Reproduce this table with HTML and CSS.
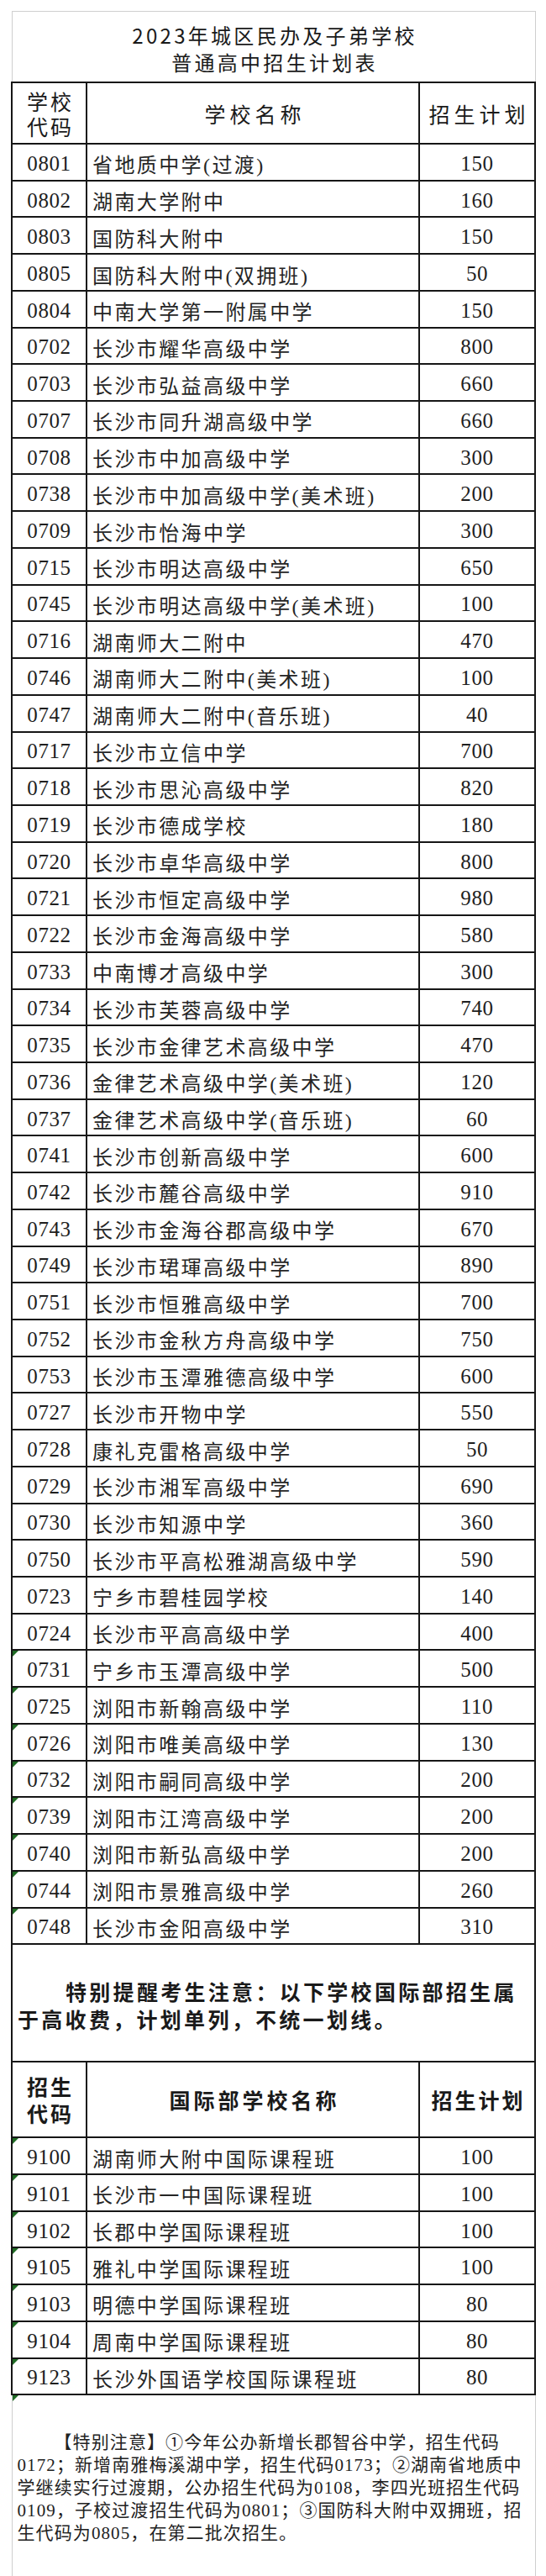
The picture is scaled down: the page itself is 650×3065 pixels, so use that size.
FILE: index.html
```html
<!DOCTYPE html>
<html lang="zh-CN">
<head>
<meta charset="utf-8">
<title>2023年城区民办及子弟学校普通高中招生计划表</title>
<link rel="stylesheet" href="styles.css">
</head>
<body>
<table class="sheet">
  <colgroup>
    <col class="c-code">
    <col class="c-name">
    <col class="c-plan">
  </colgroup>
  <tbody>
    <tr class="title"><td colspan="3">2023年城区民办及子弟学校<br>普通高中招生计划表</td></tr>
    <tr class="head">
      <td class="h-code">学校<br>代码</td>
      <td class="h-name">学校名称</td>
      <td class="h-plan">招生计划</td>
    </tr>
    <tr class="r"><td class="code">0801</td><td class="name">省地质中学(过渡)</td><td class="plan">150</td></tr>
    <tr class="r"><td class="code">0802</td><td class="name">湖南大学附中</td><td class="plan">160</td></tr>
    <tr class="r"><td class="code">0803</td><td class="name">国防科大附中</td><td class="plan">150</td></tr>
    <tr class="r"><td class="code">0805</td><td class="name">国防科大附中(双拥班)</td><td class="plan">50</td></tr>
    <tr class="r"><td class="code">0804</td><td class="name">中南大学第一附属中学</td><td class="plan">150</td></tr>
    <tr class="r"><td class="code">0702</td><td class="name">长沙市耀华高级中学</td><td class="plan">800</td></tr>
    <tr class="r"><td class="code">0703</td><td class="name">长沙市弘益高级中学</td><td class="plan">660</td></tr>
    <tr class="r"><td class="code">0707</td><td class="name">长沙市同升湖高级中学</td><td class="plan">660</td></tr>
    <tr class="r"><td class="code">0708</td><td class="name">长沙市中加高级中学</td><td class="plan">300</td></tr>
    <tr class="r"><td class="code">0738</td><td class="name">长沙市中加高级中学(美术班)</td><td class="plan">200</td></tr>
    <tr class="r"><td class="code">0709</td><td class="name">长沙市怡海中学</td><td class="plan">300</td></tr>
    <tr class="r"><td class="code">0715</td><td class="name">长沙市明达高级中学</td><td class="plan">650</td></tr>
    <tr class="r"><td class="code">0745</td><td class="name">长沙市明达高级中学(美术班)</td><td class="plan">100</td></tr>
    <tr class="r"><td class="code">0716</td><td class="name">湖南师大二附中</td><td class="plan">470</td></tr>
    <tr class="r"><td class="code">0746</td><td class="name">湖南师大二附中(美术班)</td><td class="plan">100</td></tr>
    <tr class="r"><td class="code">0747</td><td class="name">湖南师大二附中(音乐班)</td><td class="plan">40</td></tr>
    <tr class="r"><td class="code">0717</td><td class="name">长沙市立信中学</td><td class="plan">700</td></tr>
    <tr class="r"><td class="code">0718</td><td class="name">长沙市思沁高级中学</td><td class="plan">820</td></tr>
    <tr class="r"><td class="code">0719</td><td class="name">长沙市德成学校</td><td class="plan">180</td></tr>
    <tr class="r"><td class="code">0720</td><td class="name">长沙市卓华高级中学</td><td class="plan">800</td></tr>
    <tr class="r"><td class="code">0721</td><td class="name">长沙市恒定高级中学</td><td class="plan">980</td></tr>
    <tr class="r"><td class="code">0722</td><td class="name">长沙市金海高级中学</td><td class="plan">580</td></tr>
    <tr class="r"><td class="code">0733</td><td class="name">中南博才高级中学</td><td class="plan">300</td></tr>
    <tr class="r"><td class="code">0734</td><td class="name">长沙市芙蓉高级中学</td><td class="plan">740</td></tr>
    <tr class="r"><td class="code">0735</td><td class="name">长沙市金律艺术高级中学</td><td class="plan">470</td></tr>
    <tr class="r"><td class="code">0736</td><td class="name">金律艺术高级中学(美术班)</td><td class="plan">120</td></tr>
    <tr class="r"><td class="code">0737</td><td class="name">金律艺术高级中学(音乐班)</td><td class="plan">60</td></tr>
    <tr class="r"><td class="code">0741</td><td class="name">长沙市创新高级中学</td><td class="plan">600</td></tr>
    <tr class="r"><td class="code">0742</td><td class="name">长沙市麓谷高级中学</td><td class="plan">910</td></tr>
    <tr class="r"><td class="code">0743</td><td class="name">长沙市金海谷郡高级中学</td><td class="plan">670</td></tr>
    <tr class="r"><td class="code">0749</td><td class="name">长沙市珺琿高级中学</td><td class="plan">890</td></tr>
    <tr class="r"><td class="code">0751</td><td class="name">长沙市恒雅高级中学</td><td class="plan">700</td></tr>
    <tr class="r"><td class="code">0752</td><td class="name">长沙市金秋方舟高级中学</td><td class="plan">750</td></tr>
    <tr class="r"><td class="code">0753</td><td class="name">长沙市玉潭雅德高级中学</td><td class="plan">600</td></tr>
    <tr class="r"><td class="code">0727</td><td class="name">长沙市开物中学</td><td class="plan">550</td></tr>
    <tr class="r"><td class="code">0728</td><td class="name">康礼克雷格高级中学</td><td class="plan">50</td></tr>
    <tr class="r"><td class="code">0729</td><td class="name">长沙市湘军高级中学</td><td class="plan">690</td></tr>
    <tr class="r"><td class="code">0730</td><td class="name">长沙市知源中学</td><td class="plan">360</td></tr>
    <tr class="r"><td class="code">0750</td><td class="name">长沙市平高松雅湖高级中学</td><td class="plan">590</td></tr>
    <tr class="r"><td class="code">0723</td><td class="name">宁乡市碧桂园学校</td><td class="plan">140</td></tr>
    <tr class="r"><td class="code">0724</td><td class="name">长沙市平高高级中学</td><td class="plan">400</td></tr>
    <tr class="r"><td class="code flag">0731</td><td class="name">宁乡市玉潭高级中学</td><td class="plan">500</td></tr>
    <tr class="r"><td class="code flag">0725</td><td class="name">浏阳市新翰高级中学</td><td class="plan">110</td></tr>
    <tr class="r"><td class="code flag">0726</td><td class="name">浏阳市唯美高级中学</td><td class="plan">130</td></tr>
    <tr class="r"><td class="code flag">0732</td><td class="name">浏阳市嗣同高级中学</td><td class="plan">200</td></tr>
    <tr class="r"><td class="code flag">0739</td><td class="name">浏阳市江湾高级中学</td><td class="plan">200</td></tr>
    <tr class="r"><td class="code flag">0740</td><td class="name">浏阳市新弘高级中学</td><td class="plan">200</td></tr>
    <tr class="r"><td class="code flag">0744</td><td class="name">浏阳市景雅高级中学</td><td class="plan">260</td></tr>
    <tr class="r"><td class="code flag">0748</td><td class="name">长沙市金阳高级中学</td><td class="plan">310</td></tr>
    <tr class="notice"><td colspan="3"><p class="notice-text">特别提醒考生注意：以下学校国际部招生属<br>于高收费，计划单列，不统一划线。</p></td></tr>
    <tr class="head head2">
      <td class="h-code">招生<br>代码</td>
      <td class="h-name">国际部学校名称</td>
      <td class="h-plan">招生计划</td>
    </tr>
    <tr class="r"><td class="code flag">9100</td><td class="name">湖南师大附中国际课程班</td><td class="plan">100</td></tr>
    <tr class="r"><td class="code flag">9101</td><td class="name">长沙市一中国际课程班</td><td class="plan">100</td></tr>
    <tr class="r"><td class="code flag">9102</td><td class="name">长郡中学国际课程班</td><td class="plan">100</td></tr>
    <tr class="r"><td class="code flag">9105</td><td class="name">雅礼中学国际课程班</td><td class="plan">100</td></tr>
    <tr class="r"><td class="code flag">9103</td><td class="name">明德中学国际课程班</td><td class="plan">80</td></tr>
    <tr class="r"><td class="code flag">9104</td><td class="name">周南中学国际课程班</td><td class="plan">80</td></tr>
    <tr class="r"><td class="code flag">9123</td><td class="name">长沙外国语学校国际课程班</td><td class="plan">80</td></tr>
    <tr class="note"><td colspan="3" class="flag"><p class="note-text"><span class="first">【特别注意】①今年公办新增长郡智谷中学，招生代码</span><br>0172；新增南雅梅溪湖中学，招生代码0173；②湖南省地质中<br>学继续实行过渡期，公办招生代码为0108，李四光班招生代码<br>0109，子校过渡招生代码为0801；③国防科大附中双拥班，招<br>生代码为0805，在第二批次招生。</p></td></tr>
  </tbody>
</table>
</body>
</html>
```

FILE: styles.css
```css
body {
  margin: 0;
  background: #ffffff;
  color: #1e1e1e;
}

.sheet {
  width: 623px;
  margin: 13px 0 0 13px;
  border-collapse: collapse;
  table-layout: fixed;
}

.c-code { width: 89px; }
.c-name { width: 396px; }
.c-plan { width: 138px; }

.sheet td {
  padding: 0;
  border: 2px solid #161616;
  vertical-align: middle;
  position: relative;
}

/* title */
.title td {
  height: 79px;
  border-top: 1px solid #cfcfcf;
  border-left: 1px solid #cfcfcf;
  border-right: 1px solid #cfcfcf;
  text-align: center;
  font-family: "Noto Sans CJK SC", sans-serif;
  font-size: 24px;
  line-height: 32px;
  letter-spacing: 3.3px;
  padding: 4px 0 0 3px;
  color: #1a1a1a;
}

/* header rows */
.head td {
  height: 71px;
  text-align: center;
  font-family: "Noto Sans CJK SC", sans-serif;
  font-size: 25px;
  letter-spacing: 5px;
  padding-left: 5px;
  color: #1a1a1a;
}
.head .h-code {
  line-height: 30px;
  letter-spacing: 3px;
  padding-left: 3px;
}
.head2 td {
  height: 88px;
  font-weight: bold;
}
.head2 .h-name { letter-spacing: 4px; padding-left: 4px; }
.head2 .h-plan { letter-spacing: 3px; padding-left: 3px; }
.head2 .h-code { line-height: 32px; }

/* data rows */
.r { height: 43.73px; }
.r td { padding-top: 4px; }
.code,
.plan {
  text-align: center;
  font-family: "Liberation Serif", serif;
  font-size: 25px;
  letter-spacing: 0.6px;
  color: #1e1e1e;
}
.name {
  text-align: left;
  white-space: nowrap;
  padding-left: 6px !important;
  font-family: "Liberation Serif", "Noto Sans CJK SC", serif;
  font-size: 24px;
  letter-spacing: 2.4px;
  color: #252525;
}

/* Excel error indicator */
.flag::before {
  content: "";
  position: absolute;
  top: 0;
  left: 0;
  border-top: 7px solid #1f6a24;
  border-right: 7px solid transparent;
}

/* notice */
.notice td {
  height: 132px;
  padding: 6px 6px 0 6px;
}
.notice-text {
  margin: 0;
  font-family: "Noto Sans CJK SC", sans-serif;
  font-weight: bold;
  font-size: 25px;
  line-height: 33px;
  letter-spacing: 3.3px;
  text-indent: 57px;
  color: #1a1a1a;
}

/* bottom note */
.note td {
  height: 219px;
  border-left: 1px solid #cfcfcf;
  border-right: 1px solid #cfcfcf;
  border-bottom: 1px solid #cfcfcf;
  padding: 0 6px;
  vertical-align: top;
}
.note-text {
  margin: 43px 0 0 0;
  white-space: nowrap;
  font-family: "Liberation Serif", "Noto Sans CJK SC", serif;
  font-size: 21px;
  line-height: 27px;
  letter-spacing: 1.1px;
  color: #222222;
}
.note-text .first {
  display: inline-block;
  padding-left: 44px;
}
```
